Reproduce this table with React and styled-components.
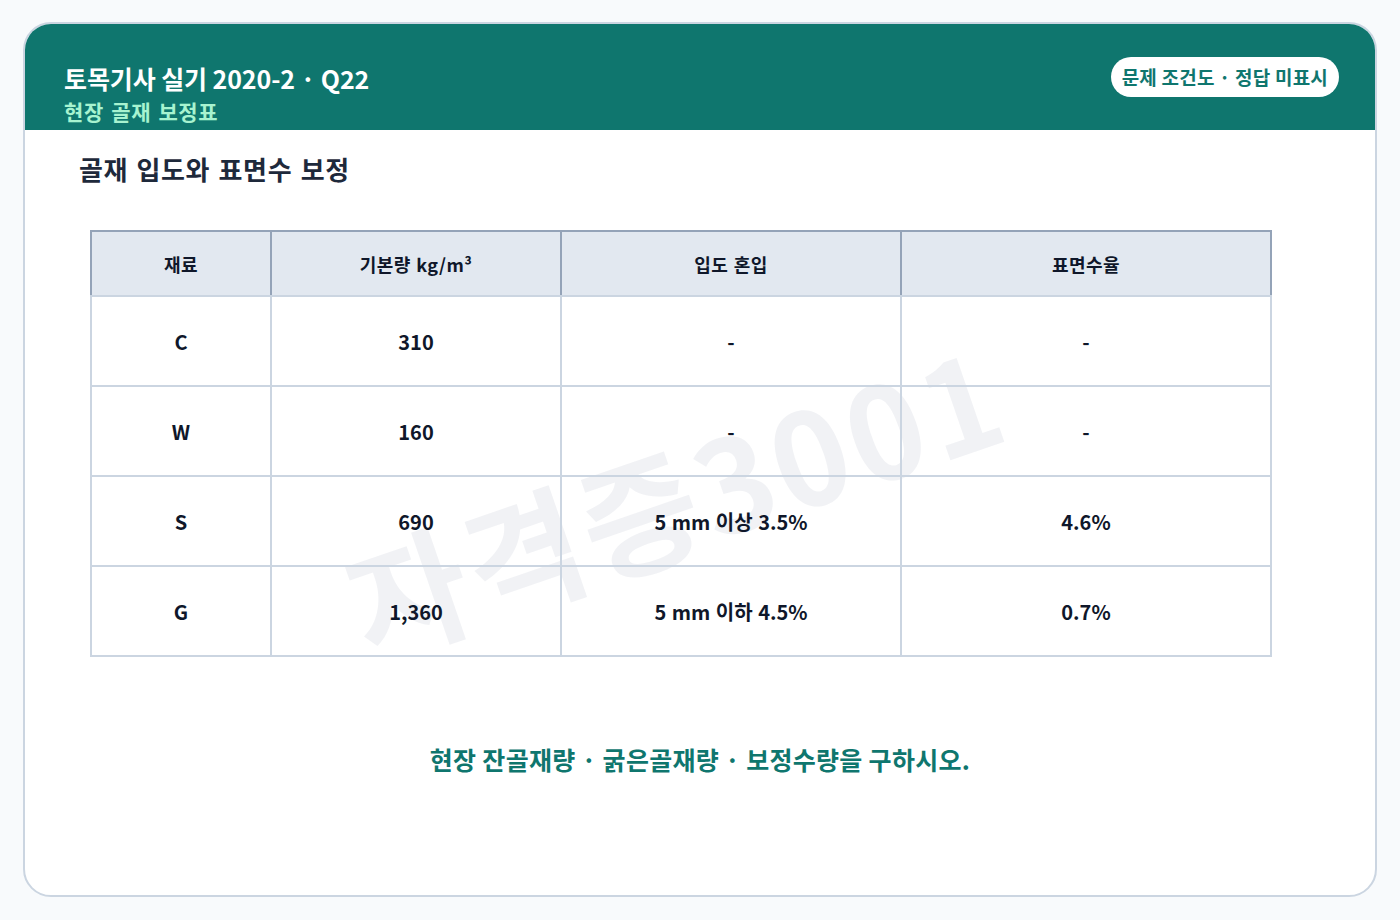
import React from "react";
import styled, { createGlobalStyle } from "styled-components";

const GlobalStyle = createGlobalStyle`
  html, body {
    margin: 0;
    padding: 0;
    background: #f8fafc;
  }
  body {
    font-family: "Noto Sans CJK KR", "Noto Sans", sans-serif;
  }
`;

const Page = styled.div`
  width: 1400px;
  height: 920px;
  box-sizing: border-box;
  padding: 22px 23px 23px;
`;

const Card = styled.div`
  position: relative;
  height: 875px;
  box-sizing: border-box;
  background: #ffffff;
  border: 2px solid #cbd5e1;
  border-radius: 28px;
  overflow: hidden;
  display: flex;
  flex-direction: column;
`;

const Header = styled.div`
  background: #0f766e;
  height: 106px;
  box-sizing: border-box;
  padding: 36px 36px 0 39px;
  display: flex;
  justify-content: space-between;
  align-items: flex-start;
`;

const TitleBlock = styled.div`
  display: flex;
  flex-direction: column;
`;

const Title = styled.div`
  color: #ffffff;
  font-size: 25px;
  font-weight: 700;
  line-height: 36px;
  letter-spacing: -0.1px;
`;

const Subtitle = styled.div`
  color: #a7f3d0;
  font-size: 21px;
  font-weight: 700;
  line-height: 28px;
  margin-top: 1px;
  letter-spacing: 0.6px;
  word-spacing: 2px;
`;

const Pill = styled.div`
  margin-top: -3px;
  background: #ffffff;
  color: #0f766e;
  font-size: 19px;
  font-weight: 700;
  height: 40px;
  line-height: 40px;
  padding: 0 11px;
  border-radius: 20px;
  letter-spacing: 0.2px;
`;

const Body = styled.div`
  position: relative;
  flex: 1;
  padding: 19px 0 0 54px;
  display: flex;
  flex-direction: column;
`;

const Heading = styled.h2`
  margin: 0;
  color: #1e293b;
  font-size: 26px;
  font-weight: 700;
  line-height: 40px;
  letter-spacing: 0.6px;
  word-spacing: 2px;
`;

const Table = styled.table`
  position: relative;
  z-index: 1;
  margin: 41px 0 0 11px;
  width: 1180px;
  border-collapse: collapse;
  table-layout: fixed;
`;

const Th = styled.th`
  height: 63px;
  background: #e2e8f0;
  border: 2px solid #94a3b8;
  border-bottom-color: #cbd5e1;
  color: #0f172a;
  font-size: 18px;
  font-weight: 700;
  text-align: center;
  padding: 0;
  letter-spacing: 0.4px;
  word-spacing: 1px;
`;

const Td = styled.td`
  height: 88px;
  border: 2px solid #cbd5e1;
  color: #0f172a;
  font-size: 20px;
  font-weight: 700;
  text-align: center;
  padding: 0;
  word-spacing: 1px;
`;

const Watermark = styled.div`
  position: absolute;
  z-index: 0;
  left: 308px;
  top: 303px;
  transform: rotate(-19deg);
  transform-origin: center;
  font-size: 128px;
  font-weight: 700;
  color: rgba(100, 116, 139, 0.09);
  letter-spacing: 4px;
  white-space: nowrap;
  pointer-events: none;
  line-height: 1;
`;

const Question = styled.div`
  margin: 84px 0 0 -54px;
  text-align: center;
  color: #0f766e;
  font-size: 25px;
  font-weight: 700;
  line-height: 36px;
  letter-spacing: 0.3px;
`;

const columns = [
  { label: "재료", width: 180 },
  { label: <>기본량 kg/m³</>, width: 290 },
  { label: "입도 혼입", width: 340 },
  { label: "표면수율", width: 370 },
];

const rows = [
  ["C", "310", "-", "-"],
  ["W", "160", "-", "-"],
  ["S", "690", "5 mm 이상 3.5%", "4.6%"],
  ["G", "1,360", "5 mm 이하 4.5%", "0.7%"],
];

export default function App() {
  return (
    <Page>
      <GlobalStyle />
      <Card>
        <Header>
          <TitleBlock>
            <Title>토목기사 실기 2020-2 · Q22</Title>
            <Subtitle>현장 골재 보정표</Subtitle>
          </TitleBlock>
          <Pill>문제 조건도 · 정답 미표시</Pill>
        </Header>
        <Body>
          <Heading>골재 입도와 표면수 보정</Heading>
          <Watermark>자격증3001</Watermark>
          <Table>
            <colgroup>
              {columns.map((c, i) => (
                <col key={i} style={{ width: c.width }} />
              ))}
            </colgroup>
            <thead>
              <tr>
                {columns.map((c, i) => (
                  <Th key={i}>{c.label}</Th>
                ))}
              </tr>
            </thead>
            <tbody>
              {rows.map((r) => (
                <tr key={r[0]}>
                  {r.map((cell, i) => (
                    <Td key={i}>{cell}</Td>
                  ))}
                </tr>
              ))}
            </tbody>
          </Table>
          <Question>현장 잔골재량 · 굵은골재량 · 보정수량을 구하시오.</Question>
        </Body>
      </Card>
    </Page>
  );
}
